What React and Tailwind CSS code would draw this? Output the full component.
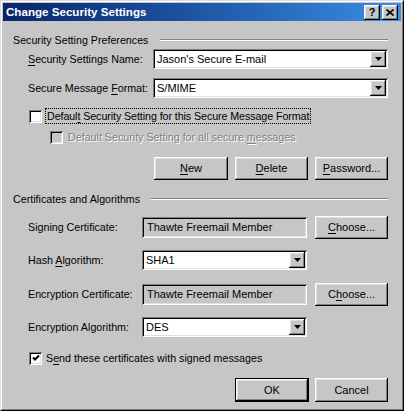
import React from "react";

const sunken =
  "shadow-[inset_1px_1px_0_#808080,inset_-1px_-1px_0_#ffffff,inset_2px_2px_0_#000000,inset_-2px_-2px_0_#dfdfdf]";
const raised =
  "shadow-[inset_-1px_-1px_0_#000000,inset_1px_1px_0_#ffffff,inset_-2px_-2px_0_#808080,inset_2px_2px_0_#dfdfdf]";

function DropBtn() {
  return (
    <div className={`flex h-[16px] w-[16px] shrink-0 items-center justify-center bg-[#c6c6c6] ${raised}`}>
      <svg width="7" height="4" viewBox="0 0 7 4">
        <polygon points="0,0 7,0 3.5,4" fill="#000" />
      </svg>
    </div>
  );
}

function Combo({ text, className }) {
  return (
    <div className={`flex h-[20px] items-center bg-white pl-[4px] pr-[2px] ${sunken} ${className}`}>
      <span className="flex-1 text-[11px] leading-none">{text}</span>
      <DropBtn />
    </div>
  );
}

function Field({ text }) {
  return (
    <div className={`flex h-[21px] w-[165px] items-center bg-[#c6c6c6] pl-[5px] ${sunken}`}>
      <span className="text-[11px] leading-none">{text}</span>
    </div>
  );
}

function Btn({ children, className = "" }) {
  return (
    <div className={`flex h-full items-center justify-center bg-[#c6c6c6] text-[11px] ${raised} ${className}`}>
      {children}
    </div>
  );
}

function Check({ checked, disabled }) {
  return (
    <div
      className={`flex h-[13px] w-[13px] shrink-0 items-center justify-center ${sunken} ${
        disabled ? "bg-[#c6c6c6]" : "bg-white"
      }`}
    >
      {checked && (
        <svg width="8" height="8" viewBox="0 0 8 8">
          <polyline points="1,3.5 3,5.5 7,1.5" fill="none" stroke="#000" strokeWidth="2" />
        </svg>
      )}
    </div>
  );
}

function Header({ text, gap }) {
  return (
    <div className="flex h-[14px] items-center">
      <span className="text-[10.7px] leading-none">{text}</span>
      <div className={`flex-1 border-t border-b border-t-[#808080] border-b-white ${gap}`} />
    </div>
  );
}

export default function App() {
  return (
    <div className="h-[411px] w-[404px] border border-t-[#dcdcdc] border-l-[#dcdcdc] border-r-black border-b-black font-['Liberation_Sans',Arial,sans-serif] text-black">
      <div className="flex h-full flex-col border border-t-white border-l-white border-r-[#808080] border-b-[#808080] bg-[#c6c6c6] p-[1px]">
        {/* title bar */}
        <div className="flex h-[18px] shrink-0 items-center bg-linear-to-r from-[#0a246a] to-[#3a8ee6] pl-[3px] pr-[3px]">
          <span className="flex-1 text-[11.6px] font-bold leading-none text-white">Change Security Settings</span>
          <div className={`flex h-[15px] w-[16px] items-center justify-center bg-[#c6c6c6] ${raised}`}>
            <span className="text-[11px] font-bold leading-none">?</span>
          </div>
          <div className={`ml-[2px] flex h-[15px] w-[16px] items-center justify-center bg-[#c6c6c6] ${raised}`}>
            <svg width="8" height="7" viewBox="0 0 8 7">
              <path d="M0.5 0.5 L7.5 6.5 M7.5 0.5 L0.5 6.5" stroke="#000" strokeWidth="1.6" />
            </svg>
          </div>
        </div>

        <div className="flex flex-1 flex-col pl-[10px] pr-[13px] text-[10.7px]">
          <div className="mt-[12px]">
            <Header text="Security Setting Preferences" gap="ml-[12px]" />
          </div>

          <div className="mt-[2px] flex h-[20px] items-center pl-[15px]">
            <span className="w-[125px] leading-none">
              <u className="underline-offset-2">S</u>ecurity Settings Name:
            </span>
            <Combo text="Jason's Secure E-mail" className="flex-1" />
          </div>

          <div className="mt-[9px] flex h-[20px] items-center pl-[15px]">
            <span className="w-[125px] leading-none">
              Secure Message <u className="underline-offset-2">F</u>ormat:
            </span>
            <Combo text="S/MIME" className="flex-1" />
          </div>

          <div className="mt-[10px] flex h-[16px] items-center pl-[16px]">
            <Check />
            <span className="ml-[3px] border border-dotted border-black px-[1px] py-[2px] leading-none tracking-[-0.08px]">
              Defaul<u className="underline-offset-2">t</u> Security Setting for this Secure Message Format
            </span>
          </div>

          <div className="mt-[5px] flex h-[16px] items-center pl-[37px]">
            <Check disabled />
            <span className="ml-[5px] leading-none text-[#808080] [text-shadow:1px_1px_0_#ffffff]">
              Default Security Setting for all secure <u className="underline-offset-2">m</u>essages
            </span>
          </div>

          <div className="mt-[12px] flex h-[23px] justify-end gap-[7px]">
            <Btn className="w-[74px]">
              <u className="underline-offset-2">N</u>ew
            </Btn>
            <Btn className="w-[73px]">
              <u className="underline-offset-2">D</u>elete
            </Btn>
            <Btn className="w-[73px]">
              <u className="underline-offset-2">P</u>assword...
            </Btn>
          </div>

          <div className="mt-[12px]">
            <Header text="Certificates and Algorithms" gap="ml-[11px]" />
          </div>

          <div className="mt-[10px] flex h-[23px] items-center pl-[15px]">
            <span className="w-[114px] leading-none">Signing Certificate:</span>
            <Field text="Thawte Freemail Member" />
            <div className="flex-1" />
            <Btn className="w-[73px]">
              <u className="underline-offset-2">C</u>hoose...
            </Btn>
          </div>

          <div className="mt-[11px] flex h-[20px] items-center pl-[15px]">
            <span className="w-[114px] leading-none">
              Hash <u className="underline-offset-2">A</u>lgorithm:
            </span>
            <Combo text="SHA1" className="w-[165px]" />
          </div>

          <div className="mt-[13px] flex h-[23px] items-center pl-[15px]">
            <span className="w-[114px] leading-none">Encryption Certificate:</span>
            <Field text="Thawte Freemail Member" />
            <div className="flex-1" />
            <Btn className="w-[73px]">
              C<u className="underline-offset-2">h</u>oose...
            </Btn>
          </div>

          <div className="mt-[11px] flex h-[20px] items-center pl-[15px]">
            <span className="w-[114px] leading-none">Encryption Algorithm:</span>
            <Combo text="DES" className="w-[165px]" />
          </div>

          <div className="mt-[13px] flex h-[16px] items-center pl-[16px]">
            <Check checked />
            <span className="ml-[4px] leading-none">
              S<u className="underline-offset-2">e</u>nd these certificates with signed messages
            </span>
          </div>

          <div className="mt-[12px] flex h-[24px] justify-end gap-[6px]">
            <div className="h-full w-[74px] border border-black">
              <Btn className="w-full">OK</Btn>
            </div>
            <Btn className="w-[73px]">Cancel</Btn>
          </div>
        </div>
      </div>
    </div>
  );
}
